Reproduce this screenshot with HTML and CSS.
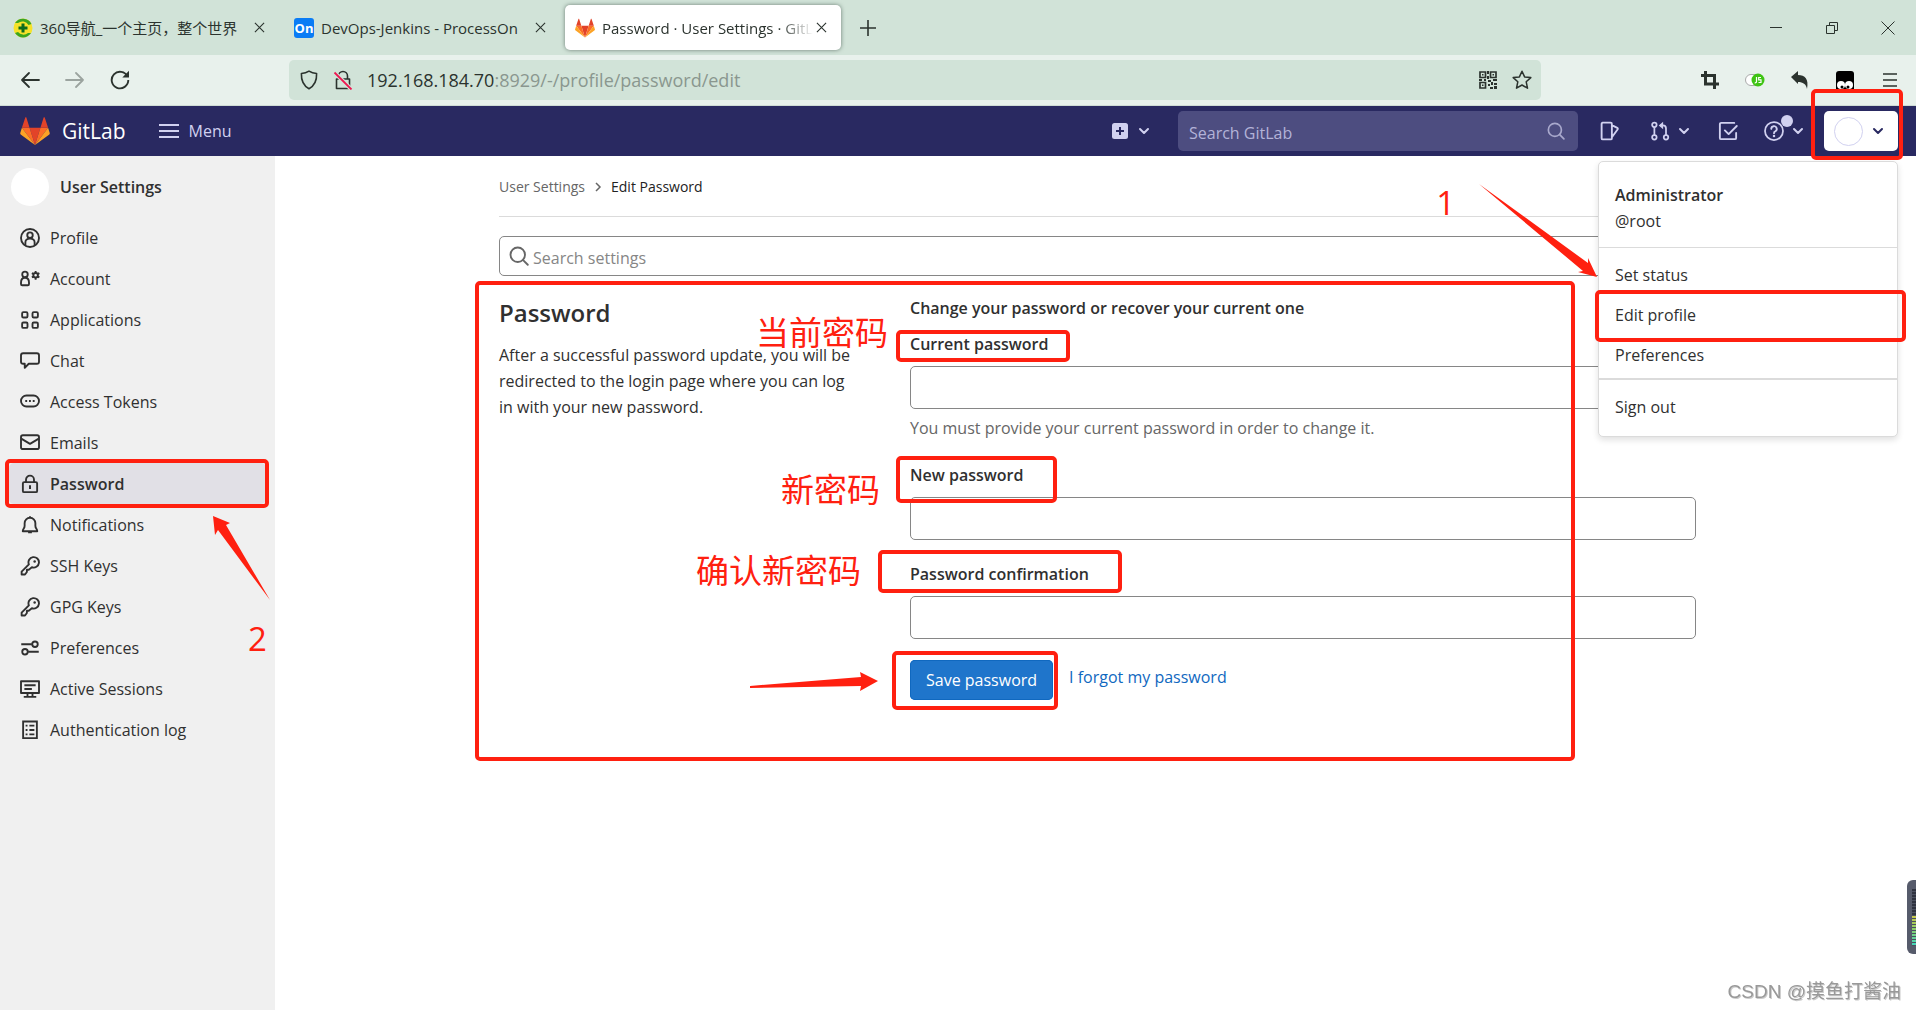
FILE: index.html
```html
<!DOCTYPE html>
<html lang="en">
<head>
<meta charset="utf-8">
<title>Password · User Settings · GitLab</title>
<link rel="stylesheet" href="styles.css">
</head>
<body>
<svg class="defs" aria-hidden="true">
  <symbol id="tanuki" viewBox="0 0 36 34">
    <path fill="#e24329" d="M18 34 24.600 13.100H11.400z"/>
    <path fill="#fc6d26" d="M18 34 11.400 13.100H2.100zM18 34l6.600-20.900h9.300z"/>
    <path fill="#fca326" d="M2.100 13.100.1 19.500c-.2.600 0 1.200.5 1.600L18 34zM33.900 13.100l2 6.400c.2.600 0 1.200-.5 1.600L18 34z"/>
    <path fill="#e24329" d="M2.100 13.100h9.300L7.500.7c-.2-.6-1.100-.6-1.300 0zM33.900 13.100h-9.300L28.500.7c.2-.6 1.100-.6 1.300 0z"/>
  </symbol>
  <symbol id="chevron" viewBox="0 0 12 12"><path d="M2 4l4 4 4-4" fill="none" stroke="currentColor" stroke-width="2" stroke-linecap="round" stroke-linejoin="round"/></symbol>
  <symbol id="magnifier" viewBox="0 0 16 16"><g fill="none" stroke="currentColor" stroke-width="1.500" stroke-linecap="round"><circle cx="7" cy="7" r="5.800"/><path d="M11.300 11.300 15 15"/></g></symbol>
  <symbol id="cross" viewBox="0 0 12 12"><path d="M1 1l10 10M11 1 1 11" stroke="currentColor" stroke-width="1.200"/></symbol>
  <symbol id="key" viewBox="0 0 16 16"><g fill="none" stroke="currentColor" stroke-width="1.500" stroke-linejoin="round"><path d="M7.100 6.700A4.200 4.200 0 1 1 9.500 9L7 11H5.500v1.800L4 14.800H1.300v-2.300z"/></g><circle cx="11.700" cy="4.400" r="1" fill="currentColor"/></symbol>
</svg>

<header class="browser">
  <div class="tabstrip">
    <div class="tab">
      <svg class="favicon" viewBox="0 0 20 20"><circle cx="10" cy="10" r="9.500" fill="#f6e229"/><path d="M2 5A9.500 9.500 0 0 1 18.500 6l-3 1A7 7 0 0 0 5 5zM18 15A9.500 9.500 0 0 1 2 15l3-1a7 7 0 0 0 10 1z" fill="#3aa520"/><path d="M10 5.500v9M5.500 10h9" stroke="#0b6b1c" stroke-width="3"/></svg>
      <span class="tab-title">360导航_一个主页，整个世界</span>
      <button class="tab-close" aria-label="Close tab"><svg><use href="#cross"/></svg></button>
    </div>
    <div class="tab">
      <span class="on-logo">On</span>
      <span class="tab-title">DevOps-Jenkins - ProcessOn</span>
      <button class="tab-close" aria-label="Close tab"><svg><use href="#cross"/></svg></button>
    </div>
    <div class="tab tab-active">
      <svg class="favicon"><use href="#tanuki"/></svg>
      <span class="tab-title tab-fade">Password · User Settings · GitLab</span>
      <button class="tab-close" aria-label="Close tab"><svg><use href="#cross"/></svg></button>
    </div>
    <button class="tab-new" aria-label="New tab"><svg viewBox="0 0 16 16"><path d="M8 0v16M0 8h16" stroke="currentColor" stroke-width="1.600"/></svg></button>
    <div class="window-controls">
      <button aria-label="Minimize"><svg viewBox="0 0 14 14"><path d="M1 6.500h12" stroke="currentColor"/></svg></button>
      <button aria-label="Restore"><svg viewBox="0 0 14 14"><path d="M1.500 4.500h8v8h-8zM4.500 4V1.500h8v8H10" fill="none" stroke="currentColor"/></svg></button>
      <button aria-label="Close"><svg viewBox="0 0 14 14"><path d="M.5.5l13 13M13.500.5l-13 13" stroke="currentColor"/></svg></button>
    </div>
  </div>
  <div class="toolbar">
    <div class="history">
      <button aria-label="Back"><svg viewBox="0 0 20 20"><path d="M19 10H2M9 3l-7 7 7 7" fill="none" stroke="currentColor" stroke-width="1.800" stroke-linejoin="round" stroke-linecap="round"/></svg></button>
      <button class="faded" aria-label="Forward"><svg viewBox="0 0 20 20"><path d="M1 10h17M11 3l7 7-7 7" fill="none" stroke="currentColor" stroke-width="1.800" stroke-linejoin="round" stroke-linecap="round"/></svg></button>
      <button aria-label="Reload"><svg viewBox="0 0 20 20"><path d="M17.500 6.500A8.300 8.300 0 1 0 18.300 10" fill="none" stroke="currentColor" stroke-width="1.900"/><path d="M19 .8v6.700h-6.700z" fill="currentColor"/></svg></button>
    </div>
    <div class="address">
      <svg class="icon20" viewBox="0 0 20 20"><path d="M10 1.200c2.400 1.600 4.800 2.200 7.600 2.300.3 6.800-1.800 12-7.600 15.300C4.200 15.500 2.100 10.300 2.400 3.500 5.200 3.400 7.600 2.800 10 1.200z" fill="none" stroke="currentColor" stroke-width="1.600" stroke-linejoin="round"/></svg>
      <svg class="icon20" viewBox="0 0 20 20"><path d="M5.500 9V6a4.500 4.500 0 0 1 9 0v3M3.500 9h13v9.500h-13z" fill="none" stroke="currentColor" stroke-width="1.600" stroke-linejoin="round"/><path d="M1.500 2.500l17 17" stroke="#d1e3d8" stroke-width="4"/><path d="M1.500 2.500l17 17" stroke="#ee1650" stroke-width="1.800"/></svg>
      <p class="url"><span>192.168.184.70</span>:8929/-/profile/password/edit</p>
      <svg class="icon20" viewBox="0 0 20 20"><g fill="none" stroke="currentColor" stroke-width="1.700"><path d="M2 2h5.500v5.500H2zM12.500 2H18v5.500h-5.500zM2 12.500h5.500V18H2z"/></g><path d="M4 4h1.500v1.500H4zM14.500 4H16v1.500h-1.500zM4 14.500h1.500V16H4zM9 1h2v3H9zM9 6h2v3H9zM1 9h3v2H1zM6 9h2v2H6zM10 10h3v2h-3zM15 9h4v2h-4zM10 14h2v2h-2zM13 12h2v3h-2zM16 13h3v2h-3zM12 17h3v2h-3zM16 16h3v3h-3z" fill="currentColor"/></svg>
      <svg class="icon20" viewBox="0 0 20 20"><path d="M10 1.200l2.600 5.700 6.200.7-4.600 4.200 1.300 6.400L10 15l-5.500 3.200 1.300-6.400L1.200 7.600l6.200-.7z" fill="none" stroke="currentColor" stroke-width="1.500" stroke-linejoin="round"/></svg>
    </div>
    <div class="extensions">
      <button aria-label="Crop"><svg viewBox="0 0 20 20"><path d="M5.500 1v13H19M1 5.500h13.500V19" fill="none" stroke="currentColor" stroke-width="3"/></svg></button>
      <button aria-label="JavaScript switch"><svg viewBox="0 0 20 20"><rect x=".5" y="4.500" width="17" height="11" rx="5.500" fill="#fff" stroke="#aaa"/><circle cx="13" cy="10" r="6.500" fill="#3fc414"/><path d="M11.500 7v4.500q0 1.500-1.800 1.300M16 7.500h-2.300v2.300H16v2.700h-2.500" fill="none" stroke="#fff" stroke-width="1.200"/></svg></button>
      <button aria-label="Undo"><svg viewBox="0 0 20 20"><path d="M1 7l7-6v4c7 0 11 4 9 14-1-5-4-7-9-7v2z" fill="currentColor"/></svg></button>
      <button aria-label="Userscripts"><svg viewBox="0 0 20 20"><path d="M1 19V4q0-3 3-3h12q3 0 3 3v15z" fill="#000"/><circle cx="6" cy="15" r="4" fill="#fff"/><circle cx="14" cy="15" r="4" fill="#fff"/><circle cx="7" cy="17" r="1.500"/><circle cx="13" cy="17" r="1.500"/></svg></button>
      <button aria-label="Application menu"><svg viewBox="0 0 20 20"><path d="M3 4h14M3 10h14M3 16h14" stroke="currentColor" stroke-width="1.600"/></svg></button>
    </div>
  </div>
</header>

<nav class="navbar" aria-label="GitLab">
  <a class="brand" href="#"><svg><use href="#tanuki"/></svg>GitLab</a>
  <button class="menu-button"><svg viewBox="0 0 20 16"><path d="M0 2h20M0 8h20M0 14h20" stroke="currentColor" stroke-width="2"/></svg>Menu</button>
  <button class="split add" aria-label="New"><svg class="icon20" viewBox="0 0 20 20"><rect x="2" y="2" width="16" height="16" rx="2.500" fill="currentColor"/><path d="M10 6v8M6 10h8" stroke="#292961" stroke-width="2"/></svg><svg class="chev"><use href="#chevron"/></svg></button>
  <label class="nav-search"><input type="text" placeholder="Search GitLab" aria-label="Search GitLab"><svg><use href="#magnifier"/></svg></label>
  <button class="single" aria-label="Issues"><svg class="icon20" viewBox="0 0 16 16"><path d="M2 1.300h6.500a1 1 0 0 1 1 1v11.400a1 1 0 0 1-1 1H2.300a1 1 0 0 1-1-1V2.300a1 1 0 0 1 1-1zM9.500 3.300l4.300 2.200q.7.400.4 1.100L9.500 13" fill="none" stroke="currentColor" stroke-width="1.500" stroke-linejoin="round"/></svg></button>
  <button class="split" aria-label="Merge requests"><svg class="icon20" viewBox="0 0 16 16"><g fill="none" stroke="currentColor" stroke-width="1.400"><circle cx="3.500" cy="3" r="1.800"/><circle cx="3.500" cy="13" r="1.800"/><circle cx="12.800" cy="13" r="1.800"/><path d="M3.500 4.800v6.400M12.800 11.200V6q0-2.500-2.500-2.500H8"/></g><path d="M10.500.5v6L7 3.500z" fill="currentColor"/></svg><svg class="chev"><use href="#chevron"/></svg></button>
  <button class="single todo" aria-label="To-do list"><svg class="icon20" viewBox="0 0 16 16"><g fill="none" stroke="currentColor" stroke-width="1.500" stroke-linecap="round" stroke-linejoin="round"><path d="M13 1.500H2.500a1 1 0 0 0-1 1v11a1 1 0 0 0 1 1h11a1 1 0 0 0 1-1V9.500M5.500 7.500 8.500 10.500 15 4"/></g></svg></button>
  <button class="split help" aria-label="Help"><svg class="icon20" viewBox="0 0 16 16"><circle cx="8" cy="8" r="7.200" fill="none" stroke="currentColor" stroke-width="1.400"/><path d="M5.800 6.300a2.200 2.200 0 1 1 3.200 2Q8 8.700 8 9.700" fill="none" stroke="currentColor" stroke-width="1.500" stroke-linecap="round"/><circle cx="8" cy="12" r="1" fill="currentColor"/></svg><svg class="chev"><use href="#chevron"/></svg><i class="dot"></i></button>
  <div class="user">
    <button class="user-button" aria-label="User menu"><i class="avatar-small"></i><svg class="chev"><use href="#chevron"/></svg></button>
    <div class="dropdown">
      <p class="who"><strong>Administrator</strong><span>@root</span></p>
      <ul>
        <li><a href="#">Set status</a></li>
        <li><a href="#">Edit profile</a></li>
        <li><a href="#">Preferences</a></li>
      </ul>
      <ul>
        <li><a href="#">Sign out</a></li>
      </ul>
    </div>
    <i class="mark mark-avatar"></i>
    <i class="mark mark-edit"></i>
    <span class="note note-one">1</span>
    <svg class="arrow arrow-one" viewBox="0 0 118 94"><path d="M0 0 104 87 99 88 118 93 109 74 109 79z"/></svg>
  </div>
</nav>

<div class="page">
  <aside class="sidebar">
    <h2><i class="avatar"></i>User Settings</h2>
    <ul>
      <li><a href="#"><svg viewBox="0 0 16 16"><g fill="none" stroke="currentColor" stroke-width="1.500"><circle cx="8" cy="8" r="7.200"/><circle cx="8" cy="5.700" r="2.200"/><path d="M4.300 14V11.500q0-3 3.700-3t3.700 3V14"/></g></svg>Profile</a></li>
      <li><a href="#"><svg viewBox="0 0 16 16"><g fill="none" stroke="currentColor" stroke-width="1.500"><circle cx="4" cy="4.300" r="2.200"/><path d="M.8 11q0-4 3.200-4t3.200 4v1q0 1-1 1H1.800q-1 0-1-1z"/><circle cx="12.500" cy="5" r="1.800"/><path d="M12.500 1.500v1.700M12.500 6.800v1.700M9.500 3.300l1.500.8M14 5.900l1.500.8M9.500 6.700l1.500-.8M14 4.100l1.500-.8"/></g></svg>Account</a></li>
      <li><a href="#"><svg viewBox="0 0 16 16"><g fill="none" stroke="currentColor" stroke-width="1.500"><rect x="1.700" y="1.700" width="4.300" height="4.300" rx="1"/><rect x="10" y="1.700" width="4.300" height="4.300" rx="1"/><rect x="1.700" y="10" width="4.300" height="4.300" rx="1"/><rect x="10" y="10" width="4.300" height="4.300" rx="1"/></g></svg>Applications</a></li>
      <li><a href="#"><svg viewBox="0 0 16 16"><path d="M2.500 1.800h11q1.700 0 1.700 1.700v5q0 1.700-1.700 1.700H7L3.800 13.500v-3.300H2.500Q.8 10.200.8 8.500v-5q0-1.700 1.700-1.700z" fill="none" stroke="currentColor" stroke-width="1.500" stroke-linejoin="round"/></svg>Chat</a></li>
      <li><a href="#"><svg viewBox="0 0 16 16"><rect x=".8" y="2.800" width="14.400" height="8.800" rx="4.400" fill="none" stroke="currentColor" stroke-width="1.500"/><path d="M4.200 6.400h1.500v1.500H4.200zM7.200 6.400h1.500v1.500H7.200zM10.200 6.400h1.500v1.500h-1.500z" fill="currentColor"/></svg>Access Tokens</a></li>
      <li><a href="#"><svg viewBox="0 0 16 16"><g fill="none" stroke="currentColor" stroke-width="1.500" stroke-linejoin="round"><rect x=".8" y="1.800" width="14.400" height="11" rx="1.500"/><path d="M1 4.500l7 4.200 7-4.200"/></g></svg>Emails</a></li>
      <li><a class="active" href="#" aria-current="page"><svg viewBox="0 0 16 16"><g fill="none" stroke="currentColor" stroke-width="1.500"><rect x="2.300" y="6.500" width="11.400" height="8" rx="1"/><path d="M4.800 6.500V4.500a3.200 3.200 0 0 1 6.400 0v2"/></g><path d="M7.200 9h1.600v3H7.200z" fill="currentColor"/></svg>Password</a></li>
      <li><a href="#"><svg viewBox="0 0 16 16"><path d="M8 1v1M2.200 13h11.600c0-2-1.500-2-1.500-4.500V6.500a4.300 4.300 0 0 0-8.600 0v2C3.700 11 2.200 11 2.200 13zM6.500 13.800h3" fill="none" stroke="currentColor" stroke-width="1.500" stroke-linejoin="round"/></svg>Notifications</a></li>
      <li><a href="#"><svg><use href="#key"/></svg>SSH Keys</a></li>
      <li><a href="#"><svg><use href="#key"/></svg>GPG Keys</a></li>
      <li><a href="#"><svg viewBox="0 0 16 16"><g fill="none" stroke="currentColor" stroke-width="1.500"><circle cx="12" cy="5" r="2.200"/><circle cx="4" cy="11" r="2.200"/><path d="M1 5h8.500M6.500 11H15"/></g></svg>Preferences</a></li>
      <li><a href="#"><svg viewBox="0 0 16 16"><path d="M.8 1.800h14.400v9.400H.8zM3 14.300h10M6 11v3M10 11v3M3.500 5h9M3.500 8h6" fill="none" stroke="currentColor" stroke-width="1.500" stroke-linejoin="round"/></svg>Active Sessions</a></li>
      <li><a href="#"><svg viewBox="0 0 16 16"><path d="M2.500 1.200h11v13.300h-11zM7.500 4.500h4M7.500 8h4M7.500 11.500h4M4.500 4.500H6M4.500 8H6M4.500 11.500H6" fill="none" stroke="currentColor" stroke-width="1.500"/></svg>Authentication log</a></li>
    </ul>
    <i class="mark mark-sidebar"></i>
    <span class="note note-two">2</span>
    <svg class="arrow arrow-two" viewBox="0 0 58 84"><path d="M0 0l17 7-4 2 44 75L5 14l-3 5z"/></svg>
  </aside>

  <main>
    <div class="container">
      <nav class="breadcrumb" aria-label="Breadcrumb"><a href="#">User Settings</a><svg viewBox="0 0 8 10"><path d="M2 1l4 4-4 4" fill="none" stroke="currentColor" stroke-width="1.500"/></svg><a class="current" href="#">Edit Password</a></nav>
      <label class="settings-search"><svg><use href="#magnifier"/></svg><input type="text" placeholder="Search settings" aria-label="Search settings"></label>
      <div class="columns">
        <section class="intro">
          <h1>Password</h1>
          <p>After a successful password update, you will be redirected to the login page where you can log in with your new password.</p>
        </section>
        <form>
          <h2>Change your password or recover your current one</h2>
          <div class="field"><label for="current">Current password</label><input id="current" type="password"><p>You must provide your current password in order to change it.</p></div>
          <div class="field"><label for="new">New password</label><input id="new" type="password"></div>
          <div class="field"><label for="confirm">Password confirmation</label><input id="confirm" type="password"></div>
          <div class="actions"><button type="button">Save password</button><a href="#">I forgot my password</a></div>
        </form>
      </div>
      <i class="mark mark-main"></i>
      <i class="mark mark-current"></i>
      <i class="mark mark-new"></i>
      <i class="mark mark-confirm"></i>
      <i class="mark mark-save"></i>
      <span class="note note-current">当前密码</span>
      <span class="note note-new">新密码</span>
      <span class="note note-confirm">确认新密码</span>
      <svg class="arrow arrow-save" viewBox="0 0 128 20"><path d="M0 14l111-9-1-5 18 9-18 10 1-5-111 2z"/></svg>
    </div>
  </main>
</div>

<div class="meter"><i></i></div>
<p class="watermark">CSDN @摸鱼打酱油</p>
</body>
</html>
```
FILE: styles.css
```css
* { box-sizing: border-box; }
body {
  margin: 0;
  min-height: 100vh;
  display: flex;
  flex-direction: column;
  background: #fff;
  color: #303030;
  font: 16px/26px "Open Sans", "Noto Sans CJK SC", sans-serif;
}
h1, h2, p, ul { margin: 0; padding: 0; }
ul { list-style: none; }
a { color: inherit; text-decoration: none; }
button { border: 0; padding: 0; background: none; color: inherit; font: inherit; display: flex; align-items: center; justify-content: center; }
input { font: inherit; color: inherit; }
svg { display: block; flex: none; }
.defs { position: absolute; width: 0; height: 0; }
.icon20 { width: 20px; height: 20px; }
.chev { width: 12px; height: 12px; }

/* Browser window */
.browser { color: #2b332e; }
.tabstrip { display: flex; align-items: center; gap: 5px; height: 55px; background: #d1e3d8; padding-left: 3px; }
.tab { display: flex; align-items: center; width: 276px; height: 45px; padding: 0 14px 0 10px; border-radius: 5px; font-size: 15px; }
.tab-active { background: #fff; box-shadow: 0 0 4px #6b7d73; }
.favicon, .on-logo { width: 20px; height: 20px; flex: none; margin-right: 7px; }
.on-logo { background: #0a7cf5; color: #fff; border-radius: 3px; font: bold 13px/20px "Open Sans", sans-serif; text-align: center; }
.tab-title { flex: 1; overflow: hidden; white-space: nowrap; }
.tab-fade { mask-image: linear-gradient(to right, #000 84%, transparent 100%); }
.tab-close svg { width: 11px; height: 11px; }
.tab-close { margin-left: 3px; }
.tab-new { width: 44px; height: 40px; }
.tab-new svg { width: 16px; height: 16px; }
.window-controls { display: flex; margin-left: auto; }
.window-controls button { width: 56px; height: 40px; }
.window-controls svg { width: 14px; height: 14px; }
.toolbar { display: flex; align-items: center; height: 51px; background: #e8f1ec; border-bottom: 1px solid #cfdcd5; }
.history { display: flex; padding-left: 7px; width: 289px; }
.history button, .extensions button { width: 45px; height: 40px; }
.history svg, .extensions svg { width: 20px; height: 20px; }
.faded { opacity: .4; }
.address { flex: 1; display: flex; align-items: center; gap: 14px; height: 40px; padding: 0 9px 0 10px; border-radius: 5px; background: #d1e3d8; font-size: 18px; }
.url { flex: 1; color: #8a978f; }
.url span { color: #2b332e; }
.extensions { display: flex; padding: 0 4px 0 146px; }

/* GitLab top bar */
.navbar { display: flex; align-items: center; height: 50px; padding: 0 18px 0 20px; background: #292961; color: #d1d1f0; }
.brand { display: flex; align-items: center; gap: 12px; color: #fff; font-size: 21px; font-weight: 500; }
.brand svg { width: 30px; height: 28px; }
.menu-button { gap: 10px; margin: 0 auto 0 33px; }
.menu-button svg { width: 20px; height: 16px; }
.split { position: relative; justify-content: flex-start; gap: 8px; width: 58px; height: 40px; padding-left: 8px; }
.add { margin-right: 18px; }
.single { width: 64px; height: 40px; }
.todo { width: 56px; }
.nav-search { display: flex; align-items: center; width: 400px; height: 40px; padding: 0 13px 0 11px; border-radius: 5px; background: #4d4d80; }
.nav-search input { flex: 1; border: 0; outline: 0; padding: 3px 0 0; background: none; }
.nav-search input::placeholder { color: #b3b3d8; opacity: 1; }
.nav-search svg { width: 18px; height: 18px; color: #a9a9cc; }
.dot { position: absolute; left: 25px; top: 4px; width: 12px; height: 12px; border-radius: 50%; background: #d1d1f0; }
.user { position: relative; margin-left: 10px; }
.user-button { gap: 9px; width: 74px; height: 40px; padding-right: 4px; border-radius: 5px; background: #fff; color: #292961; }
.avatar-small { width: 29px; height: 29px; border: 1px solid #d1d1f0; border-radius: 50%; }
.dropdown { position: absolute; z-index: 1; right: 0; top: 50px; width: 300px; border: 1px solid #dbdbdb; border-radius: 5px; background: #fff; color: #303030; box-shadow: 0 3px 6px rgba(0, 0, 0, .12); }
.who { display: flex; flex-direction: column; padding: 20px 16px 13px; }
.who strong { font-weight: 600; }
.dropdown ul { padding: 7px 0 3px; border-top: 1px solid #dbdbdb; }
.dropdown ul + ul { padding-bottom: 9px; border-top-width: 2px; }
.dropdown a { display: block; padding: 7px 16px; }

/* Page */
.page { flex: 1; display: flex; }
.sidebar { position: relative; width: 275px; background: #f0f0f0; }
.sidebar h2 { display: flex; align-items: center; gap: 11px; height: 61px; padding-left: 11px; font-size: 16px; font-weight: 600; }
.avatar { width: 38px; height: 38px; border-radius: 50%; background: #fff; }
.sidebar ul { padding: 0 9px; }
.sidebar li a { display: flex; align-items: center; gap: 10px; height: 41px; padding-left: 11px; }
.sidebar li svg { width: 20px; height: 20px; }
.sidebar .active { font-weight: 600; background: #e1e0e6; border-radius: 5px; }
main { flex: 1; padding: 0 16px 0 20px; }
.container { position: relative; max-width: 1197px; margin: 0 auto; }
.breadcrumb { display: flex; align-items: center; gap: 9px; height: 61px; padding-top: 2px; border-bottom: 1px solid #dbdbdb; color: #666; font-size: 14px; }
.breadcrumb svg { width: 8px; height: 10px; }
.breadcrumb .current { color: #222; }
.settings-search { display: flex; align-items: center; gap: 4px; height: 40px; margin-top: 19px; padding: 0 9px; border: 1px solid #868686; border-radius: 5px; color: #666; }
.settings-search svg { width: 20px; height: 20px; }
.settings-search input { flex: 1; border: 0; outline: 0; padding: 3px 0 0; }
.settings-search input::placeholder { color: #868686; opacity: 1; }
.columns { display: grid; grid-template-columns: 1fr 2fr; gap: 18px; padding-top: 19px; }
.intro { padding-right: 32px; }
h1 { margin: 4px 0 15px; font-size: 24px; line-height: 28px; font-weight: 600; }
form h2 { font-size: 16px; line-height: 26px; font-weight: 600; }
.field { padding-top: 10px; }
.field label { display: block; font-weight: 600; margin-bottom: 9px; }
.field input { display: block; width: 100%; height: 43px; border: 1px solid #868686; border-radius: 5px; padding: 0 12px; }
.field p { margin-top: 6px; color: #666; }
.field + .field { padding-top: 21px; }
.actions { display: flex; align-items: flex-start; gap: 16px; padding-top: 21px; color: #1068bf; }
.actions a { padding-top: 4px; }
.actions button { height: 40px; padding: 0 16px; border-radius: 5px; background: #1f75cb; color: #fff; box-shadow: inset 0 0 0 1px #1068bf; }

/* Red annotations, anchored to the block they point at */
.mark { position: absolute; z-index: 2; border: 4px solid #ff2010; border-radius: 5px; pointer-events: none; }
.note { position: absolute; z-index: 2; color: #ff2010; font-size: 33px; line-height: 40px; white-space: nowrap; }
.arrow { position: absolute; z-index: 2; fill: #ff2010; }
.mark-avatar { left: -13px; top: -22px; width: 92px; height: 71px; }
.mark-edit { right: -8px; top: 179px; width: 311px; height: 52px; }
.note-one { right: 443px; top: 72px; }
.arrow-one { right: 301px; top: 73px; width: 118px; height: 94px; }
.mark-sidebar { left: 5px; top: 303px; width: 264px; height: 49px; }
.note-two { left: 248px; top: 463px; }
.arrow-two { left: 213px; top: 360px; width: 58px; height: 84px; }
.mark-main { left: -24px; top: 125px; width: 1100px; height: 480px; }
.mark-current { left: 397px; top: 174px; width: 174px; height: 32px; }
.mark-new { left: 397px; top: 300px; width: 161px; height: 47px; }
.mark-confirm { left: 379px; top: 394px; width: 244px; height: 43px; }
.mark-save { left: 393px; top: 495px; width: 166px; height: 59px; }
.note-current { left: 257px; top: 157px; }
.note-new { left: 282px; top: 314px; }
.note-confirm { left: 197px; top: 395px; }
.arrow-save { left: 251px; top: 516px; width: 128px; height: 20px; }

/* Desktop overlays */
.meter { position: fixed; right: 0; bottom: 56px; width: 9px; height: 74px; padding: 9px 0 8px 5px; border-radius: 6px 0 0 6px; background: #565b6b; }
.meter i { display: block; height: 100%; background: repeating-linear-gradient(transparent 0 2px, #4b5060 2px 3px), linear-gradient(#2f3340 48%, #c6c84c 48%, #8ccf6a 70%, #3fd6c0); }
.watermark { position: fixed; right: 15px; bottom: 5px; color: #999; font: 19px/26px "Liberation Sans", "Noto Sans CJK SC", sans-serif; text-shadow: 1px 1px 0 #ccc; }
```
